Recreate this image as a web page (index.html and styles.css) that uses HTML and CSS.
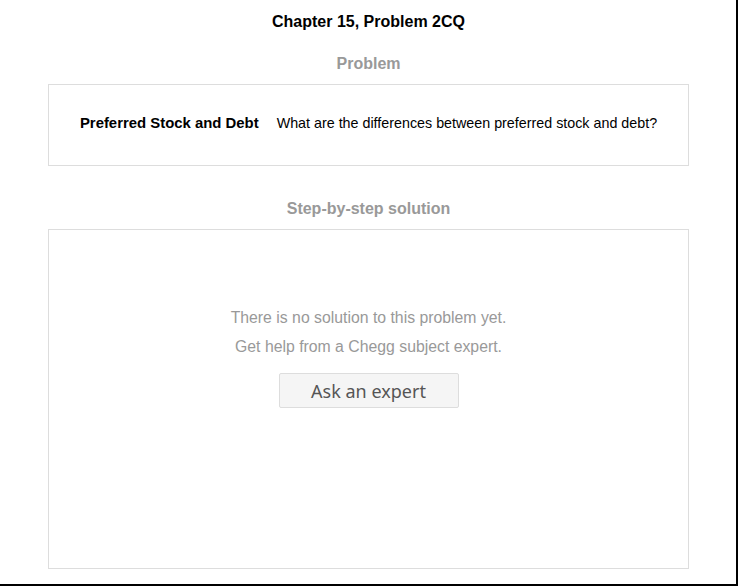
FILE: index.html
```html
<!DOCTYPE html>
<html>
<head>
<meta charset="utf-8">
<link rel="stylesheet" href="styles.css">
</head>
<body>
<div class="page">
  <h1 class="title">Chapter 15, Problem 2CQ</h1>
  <h2 class="section-title">Problem</h2>
  <div class="card problem-card">
    <span class="problem-label">Preferred Stock and Debt</span>
    <span class="problem-text">What are the differences between preferred stock and debt?</span>
  </div>
  <h2 class="section-title solution-title">Step-by-step solution</h2>
  <div class="card solution-card">
    <p class="empty-line">There is no solution to this problem yet.</p>
    <p class="empty-line">Get help from a Chegg subject expert.</p>
    <button class="ask-btn">Ask an expert</button>
  </div>
</div>
</body>
</html>
```
FILE: styles.css
```css
html, body {
  margin: 0;
  padding: 0;
  background: #fff;
}
.page {
  box-sizing: border-box;
  width: 738px;
  height: 586px;
  border-right: 2px solid #000;
  border-bottom: 2px solid #000;
  padding: 13px 47px 0 48px;
  font-family: "Liberation Sans", Arial, sans-serif;
  display: flex;
  flex-direction: column;
}
.title {
  margin: 0;
  font-size: 16px;
  line-height: 18px;
  font-weight: bold;
  text-align: center;
  color: #000;
}
.section-title {
  margin: 24px 0 0;
  font-size: 16px;
  line-height: 18px;
  font-weight: bold;
  text-align: center;
  color: #999;
}
.solution-title {
  margin-top: 34px;
}
.card {
  border: 1px solid #ddd;
  box-sizing: border-box;
}
.problem-card {
  margin-top: 11px;
  height: 82px;
  display: flex;
  align-items: center;
  justify-content: center;
  gap: 18px;
  font-size: 14.3px;
  color: #000;
  padding-bottom: 5px;
}
.problem-label {
  font-weight: bold;
  font-size: 14.9px;
}
.solution-card {
  margin-top: 11px;
  height: 340px;
  display: flex;
  flex-direction: column;
  align-items: center;
  padding-top: 73px;
}
.empty-line {
  margin: 0;
  font-size: 15.8px;
  line-height: 29px;
  color: #999;
}
.ask-btn {
  margin-top: 12px;
  width: 180px;
  height: 35px;
  background: #f5f5f5;
  border: 1px solid #ddd;
  border-radius: 2px;
  font-family: "Noto Sans", "Open Sans", sans-serif;
  font-size: 18px;
  color: #555;
  padding: 0;
}
```
